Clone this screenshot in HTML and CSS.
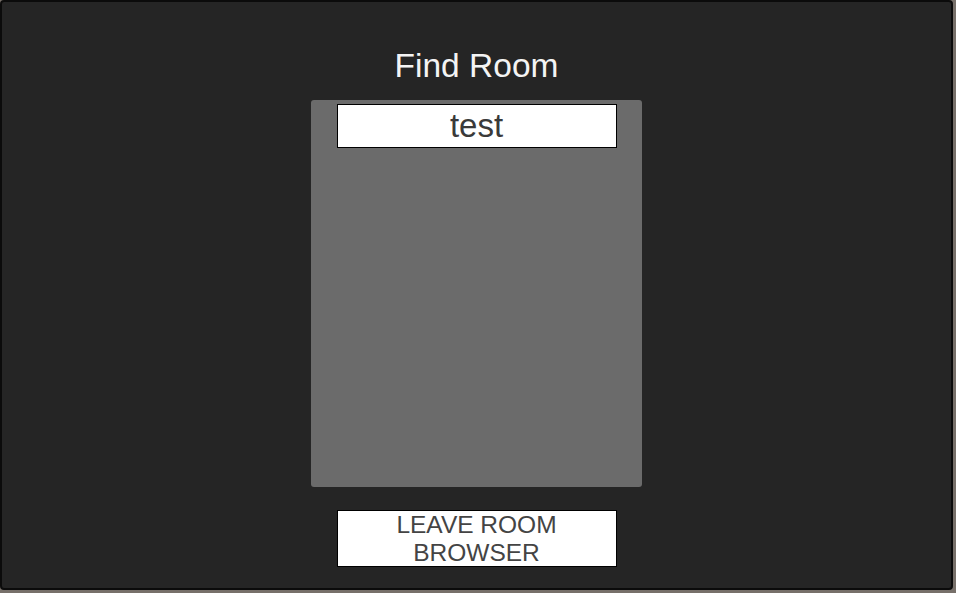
FILE: index.html
```html
<!DOCTYPE html>
<html>
<head>
<meta charset="utf-8">
<link rel="stylesheet" href="styles.css">
</head>
<body>
<div class="frame">
  <h1 class="title">Find Room</h1>
  <div class="room-list">
    <div class="room-item">test</div>
  </div>
  <button class="leave-btn">LEAVE ROOM<br>BROWSER</button>
</div>
</body>
</html>
```
FILE: styles.css
```css
html, body {
  margin: 0;
  padding: 0;
  width: 956px;
  height: 593px;
  overflow: hidden;
  background: #77706a;
  font-family: "Liberation Sans", Arial, sans-serif;
}
.frame {
  box-sizing: border-box;
  width: 953px;
  height: 590px;
  background: #252525;
  border: 2px solid #0b0b0b;
  border-radius: 4px;
  display: flex;
  flex-direction: column;
  align-items: center;
  padding-top: 45px;
}
.title {
  margin: 0;
  font-weight: normal;
  font-size: 33.5px;
  line-height: 37px;
  color: #f4f4f4;
}
.room-list {
  box-sizing: border-box;
  margin-top: 16px;
  width: 331px;
  height: 387px;
  background: #6b6b6b;
  border-radius: 3px;
  padding-top: 4px;
  display: flex;
  flex-direction: column;
  align-items: center;
}
.room-item {
  box-sizing: border-box;
  width: 280px;
  height: 44px;
  background: #fff;
  border: 1px solid #000;
  color: #3a3a3a;
  font-size: 33px;
  line-height: 42px;
  text-align: center;
}
.leave-btn {
  box-sizing: border-box;
  margin-top: 23px;
  width: 280px;
  height: 57px;
  background: #fff;
  border: 1px solid #000;
  border-radius: 0;
  padding: 0;
  color: #444;
  font-family: "Liberation Sans", Arial, sans-serif;
  font-size: 24.5px;
  line-height: 28px;
  text-align: center;
  display: flex;
  flex-direction: column;
  justify-content: flex-start;
  align-items: center;
}
```
